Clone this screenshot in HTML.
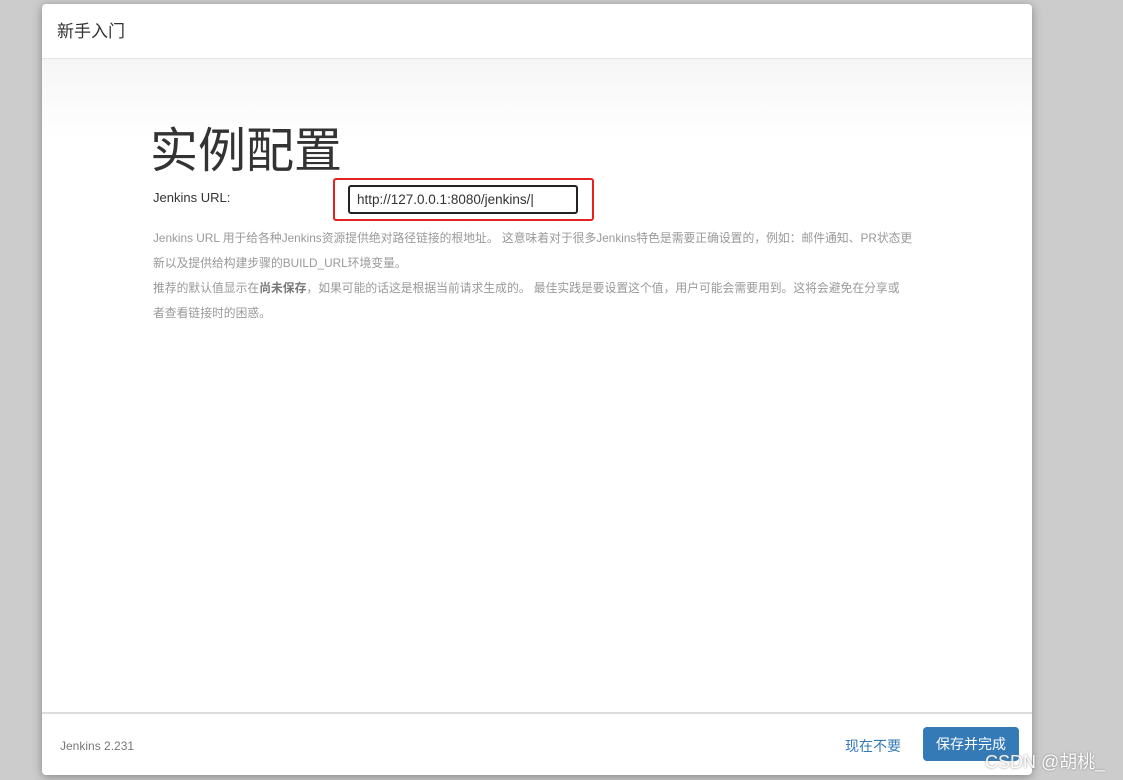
<!DOCTYPE html>
<html><head><meta charset="utf-8"><style>
body{margin:0;width:1123px;height:780px;background:#cccccc;position:relative;overflow:hidden;font-family:"Liberation Sans","Noto Sans CJK SC",sans-serif}
.m{position:absolute;left:42px;top:4px;width:990px;height:771px;background:#fff;border-radius:4px;box-shadow:0 2px 10px rgba(0,0,0,.35)}
.hd{height:54px;border-bottom:1px solid #e5e5e5;font-size:17px;color:#333;line-height:56px;padding-left:15px}
.body{position:absolute;top:55px;left:0;right:0;height:653px;background:linear-gradient(#f6f6f6,#fff 80px)}
h1{position:absolute;left:108px;top:52px;margin:0;font-size:48px;font-weight:normal;color:#333}
.lbl{position:absolute;left:111px;top:131px;font-size:13px;color:#333}
.red{position:absolute;left:291px;top:119px;width:257px;height:39px;border:2px solid #e52222;border-radius:3px}
.inp{position:absolute;left:306px;top:126px;width:219px;height:25px;border:2px solid #222;border-radius:3px;font-size:13.5px;line-height:26px;padding-left:7px;color:#333}
.help{position:absolute;left:111px;top:167px;white-space:nowrap;font-size:11.8px;color:#999;line-height:25px}
.help b{color:#777;font-weight:bold}
.ft{position:absolute;left:0;right:0;bottom:0;height:61px;border-top:2px solid #ddd}
.ver{position:absolute;left:18px;top:25px;font-size:12px;color:#777}
.no{position:absolute;left:803px;top:22px;font-size:14px;color:#337ab7}
.btn{position:absolute;left:881px;top:13px;width:96px;height:34px;background:#337ab7;border-radius:4px;color:#fff;font-size:14px;line-height:34px;text-align:center}
.wm{position:absolute;left:985px;top:748px;font-size:18px;color:#fff;text-shadow:0 0 2px #777;opacity:.9}
</style></head><body>
<div class="m">
<div class="hd">新手入门</div>
<div class="body">
<h1>实例配置</h1>
<div class="lbl">Jenkins URL:</div>
<div class="red"></div>
<div class="inp">http://127.0.0.1:8080/jenkins/|</div>
<div class="help">Jenkins URL 用于给各种Jenkins资源提供绝对路径链接的根地址。 这意味着对于很多Jenkins特色是需要正确设置的，例如：邮件通知、PR状态更<br>新以及提供给构建步骤的BUILD_URL环境变量。<br>推荐的默认值显示在<b>尚未保存</b>，如果可能的话这是根据当前请求生成的。 最佳实践是要设置这个值，用户可能会需要用到。这将会避免在分享或<br>者查看链接时的困惑。</div>
</div>
<div class="ft"><div class="ver">Jenkins 2.231</div><div class="no">现在不要</div><div class="btn">保存并完成</div></div>
</div>
<div class="wm">CSDN @胡桃_</div>
</body></html>
